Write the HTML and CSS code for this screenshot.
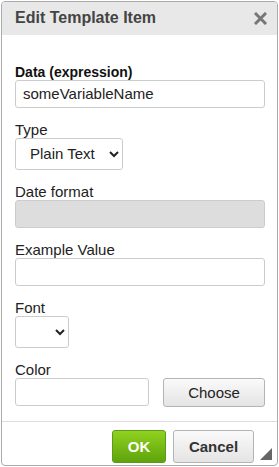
FILE: index.html
```html
<!DOCTYPE html>
<html lang="en">
<head>
    <meta charset="UTF-8">
    <title>Edit Template Item</title>
    <link rel="stylesheet" href="styles.css">
</head>
<body>
    <div class="dialog">
        <div class="dialog-header">
            <span class="dialog-title">Edit Template Item</span>
            <button class="close-button" title="Close">
                <svg width="13" height="13" viewBox="0 0 13 13">
                    <path d="M2 2 L11 11 M11 2 L2 11" stroke="#777" stroke-width="3" stroke-linecap="square"/>
                </svg>
            </button>
        </div>

        <form class="dialog-body">
            <div class="form-group">
                <label class="label-strong" for="data">Data (expression)</label>
                <input type="text" id="data" value="someVariableName">
            </div>

            <div class="form-group">
                <label for="type">Type</label>
                <select id="type" class="select-type">
                    <option>Plain Text</option>
                </select>
            </div>

            <div class="form-group">
                <label for="dateFormat">Date format</label>
                <input type="text" id="dateFormat" disabled>
            </div>

            <div class="form-group">
                <label for="example">Example Value</label>
                <input type="text" id="example">
            </div>

            <div class="form-group">
                <label for="font">Font</label>
                <select id="font" class="select-font">
                    <option></option>
                </select>
            </div>

            <div class="form-group">
                <label for="color">Color</label>
                <div class="color-row">
                    <input type="text" id="color" class="color-input">
                    <button type="button" class="choose-button">Choose</button>
                </div>
            </div>
        </form>

        <div class="dialog-footer">
            <button class="ok-button">OK</button>
            <button class="cancel-button">Cancel</button>
            <span class="resize-handle"></span>
        </div>
    </div>
</body>
</html>
```

FILE: styles.css
```css
* {
    margin: 0;
    padding: 0;
    box-sizing: border-box;
    font-family: 'Liberation Sans', Arial, sans-serif;
}

body {
    background: #fff;
}

.dialog {
    position: relative;
    margin: 1px 0 0 1px;
    width: 277px;
    height: 465px;
    border: 1px solid #aaa;
    border-radius: 4px;
    display: flex;
    flex-direction: column;
    overflow: hidden;
}

.dialog-header {
    height: 34px;
    background: #e8e8e8;
    display: flex;
    align-items: center;
    justify-content: space-between;
    padding: 0 10px 0 13px;
}

.dialog-title {
    font-size: 16px;
    font-weight: bold;
    color: #444;
}

.close-button {
    border: none;
    background: none;
    width: 13px;
    height: 13px;
    display: flex;
    cursor: pointer;
}

.dialog-body {
    flex: 1;
    padding: 29px 11px 0 13px;
}

.form-group {
    margin-bottom: 14px;
}

label {
    display: block;
    font-size: 15px;
    line-height: 16px;
    color: #222;
}

.label-strong {
    font-size: 14px;
    font-weight: bold;
    color: #111;
}

input {
    display: block;
    width: 250px;
    height: 28px;
    padding: 0 7px;
    border: 1px solid #ccc;
    border-radius: 3px;
    font-size: 15px;
    color: #222;
    background: #fff;
}

input:disabled {
    background: #ddd;
    border-color: #ccc;
}

select {
    display: block;
    height: 32px;
    border: 1px solid #ccc;
    border-radius: 3px;
    background: #fff;
    font-size: 15px;
    color: #222;
    padding: 0 4px 0 10px;
}

.select-type {
    width: 108px;
}

.select-font {
    width: 54px;
}

.color-row {
    display: flex;
    width: 250px;
    justify-content: space-between;
}

.color-input {
    width: 134px;
}

.choose-button {
    width: 102px;
    height: 29px;
    border: 1px solid #b4b4b4;
    border-radius: 3px;
    background: linear-gradient(#fafafa, #e4e4e4);
    font-size: 15px;
    color: #222;
}

.dialog-footer {
    height: 46px;
    border-top: 1px solid #ddd;
    display: flex;
    justify-content: flex-end;
    align-items: flex-start;
    gap: 7px;
    padding: 8px 23px 0 0;
}

.dialog-footer button {
    height: 33px;
    border-radius: 3px;
    font-size: 15px;
    font-weight: bold;
    cursor: pointer;
}

.ok-button {
    width: 54px;
    color: #fff;
    border: 1px solid #5c9b16;
    background: linear-gradient(#90d21f, #5ea30c);
}

.cancel-button {
    width: 81px;
    color: #333;
    border: 1px solid #b4b4b4;
    background: linear-gradient(#fafafa, #e4e4e4);
}

.resize-handle {
    position: absolute;
    right: 5px;
    bottom: 5px;
    width: 0;
    height: 0;
    border-left: 12px solid transparent;
    border-bottom: 12px solid #666;
}
```
